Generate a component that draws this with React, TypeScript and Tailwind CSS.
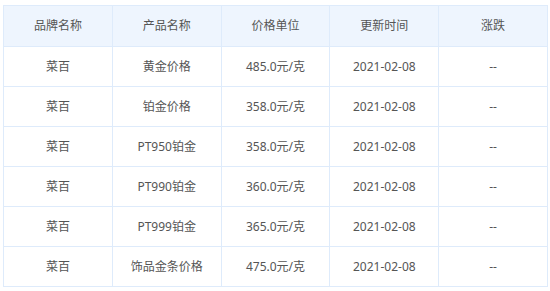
const rows = [
  ["菜百", "黄金价格", "485.0元/克", "2021-02-08", "--"],
  ["菜百", "铂金价格", "358.0元/克", "2021-02-08", "--"],
  ["菜百", "PT950铂金", "358.0元/克", "2021-02-08", "--"],
  ["菜百", "PT990铂金", "360.0元/克", "2021-02-08", "--"],
  ["菜百", "PT999铂金", "365.0元/克", "2021-02-08", "--"],
  ["菜百", "饰品金条价格", "475.0元/克", "2021-02-08", "--"],
];

const heads = ["品牌名称", "产品名称", "价格单位", "更新时间", "涨跌"];

export default function App() {
  return (
    <div className="w-[550px] h-[291px] bg-white pt-[5px] pl-[3px]" style={{ fontFamily: '"Noto Sans", "Noto Sans CJK SC", sans-serif' }}>
      <table className="w-[545px] table-fixed border-collapse text-[12px] text-[#555]">
        <thead>
          <tr className="bg-[#eef5fe]">
            {heads.map((h) => (
              <th key={h} className="h-[41px] border border-[#deebfb] font-normal text-center">
                {h}
              </th>
            ))}
          </tr>
        </thead>
        <tbody>
          {rows.map((r, i) => (
            <tr key={i}>
              {r.map((c, j) => (
                <td key={j} className="h-[40px] border border-[#deebfb] text-center">
                  {c}
                </td>
              ))}
            </tr>
          ))}
        </tbody>
      </table>
    </div>
  );
}
